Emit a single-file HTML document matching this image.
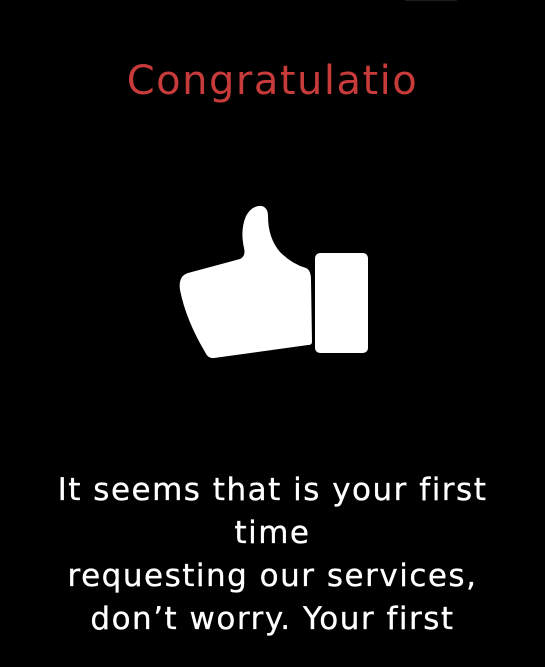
<!DOCTYPE html>
<html><head><style>
html,body{margin:0;padding:0;background:#000;width:545px;height:667px;overflow:hidden}
.t{position:absolute;left:0;width:545px;text-align:center;font-family:"DejaVu Sans","Liberation Sans",sans-serif}
h1{margin:0;top:58px;font-size:40px;letter-spacing:1.5px;font-weight:normal;color:#c83b3b}
p{margin:0;top:469px;font-size:31px;letter-spacing:1.5px;line-height:43px;color:#fff;-webkit-text-stroke:0.3px #fff}
</style></head><body>
<div style="position:absolute;left:405px;top:0;width:52px;height:1px;background:#1c1c1c"></div>
<h1 class="t">Congratulatio</h1>
<svg style="position:absolute;left:0;top:0" width="545" height="667">
<rect x="315" y="253" width="53" height="100" rx="5" fill="#fff"/>
<path d="M188 273 L240 259 Q246 256 244 248 Q240 230 246 216 Q252 205 262 206 Q268 208 268 216 Q268 238 280 252 Q292 264 306 268 Q311 270 311 280 L312 342 Q312 345 308 345 L214 358 Q208 359 205 352 Q186 320 180 290 Q178 276 188 273 Z" fill="#fff"/>
</svg>
<p class="t">It seems that is your first<br>time<br>requesting our services,<br>don’t worry. Your first</p>
</body></html>
